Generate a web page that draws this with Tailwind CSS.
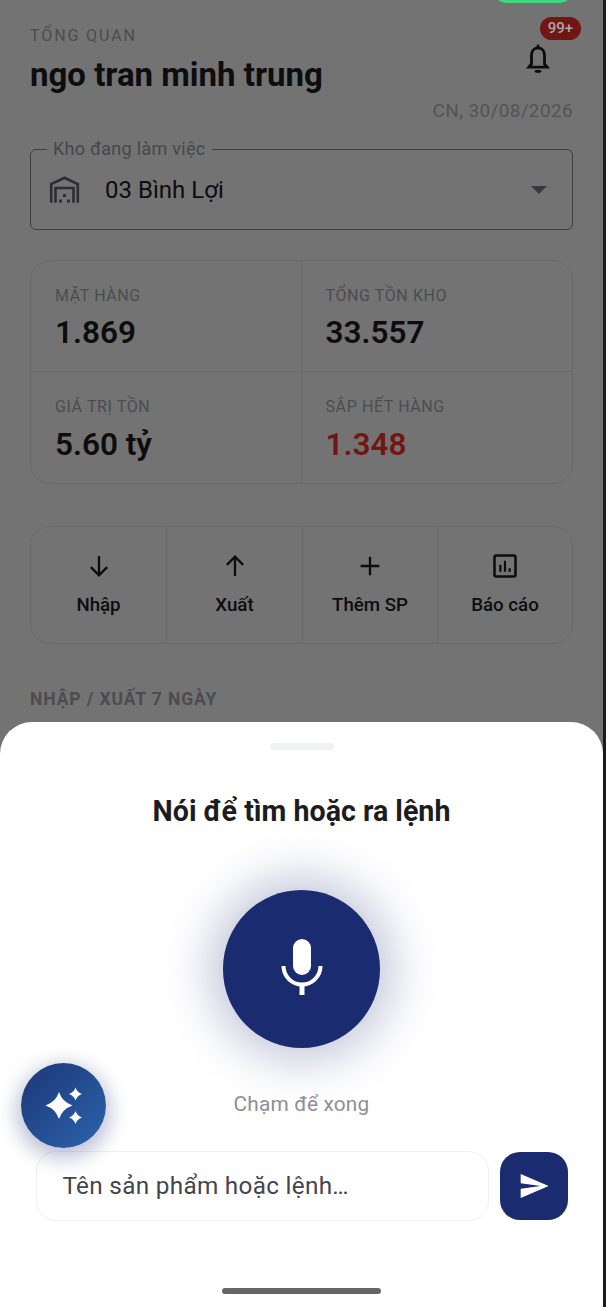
<!DOCTYPE html>
<html lang="vi">
<head>
<meta charset="utf-8">
<script src="https://cdn.jsdelivr.net/npm/@tailwindcss/browser@4"></script>
</head>
<body class="bg-[#737373] font-['Roboto',sans-serif]">
<div class="relative w-[606px] h-[1307px] overflow-hidden flex bg-[#1c1c1c]">
    <!-- dimmed dashboard -->
    <main class="relative w-[603px] h-full shrink-0 bg-[#737373] pt-[26px] px-[30px]">
        <div class="absolute left-[496px] top-[-16px] w-[74px] h-[19px] rounded-full bg-[#3fd67f]"></div>

        <header class="relative h-[97px]">
            <p class="pt-[1px] text-[16px] leading-[18px] tracking-[1.9px] text-[#4c4c50]">TỔNG QUAN</p>
            <h1 class="mt-[11px] text-[33px] leading-[38px] font-bold text-[#0d0d0f]">ngo tran minh trung</h1>
            <p class="absolute right-0 top-[73px] text-[19px] leading-[24px] tracking-[0.35px] text-[#535357]">CN, 30/08/2026</p>
            <svg class="absolute left-[491px] top-[17px]" width="34" height="34" viewBox="0 0 24 24" fill="none" stroke="#0c0c0e" stroke-width="2"><path d="M12 3.400c-3 0-4.600 2.500-4.600 5.300v6.100L5.600 17h12.800l-1.800-2.200V8.700c0-2.800-1.600-5.300-4.600-5.300z"/><path d="M10.700 20h2.600" stroke-linecap="round"/><path d="M12 2v1.400" stroke-linecap="round"/></svg>
            <span class="absolute left-[510px] top-[-9px] w-[41px] h-[23px] rounded-full bg-[#711515] text-[15px] leading-[23px] font-medium text-center text-[#a9a9a9]">99+</span>
        </header>

        <!-- warehouse select -->
        <div class="relative mt-[26px] h-[81px] border border-[#3d3d42] rounded-[6px] flex items-center pl-[17px] pr-[25px]">
            <span class="absolute left-[16px] top-[-12px] px-[6px] bg-[#737373] text-[18px] leading-[22px] tracking-[0.3px] text-[#47474b]">Kho đang làm việc</span>
            <svg width="32" height="32" viewBox="0 0 32 32" fill="none" stroke="#2e2e32" stroke-width="2.600"><path d="M3.200 28.700V10L16.500 3.800 29.800 10V28.700"/><path d="M7.500 28.700V14H25.500V28.700"/><rect x="15" y="20" width="3" height="3" fill="#2e2e32" stroke="none"/><rect x="11" y="25.500" width="3" height="3" fill="#2e2e32" stroke="none"/><rect x="19" y="25.500" width="3" height="3" fill="#2e2e32" stroke="none"/></svg>
            <span class="ml-[25px] text-[24px] leading-[32px] text-[#0d0d0f]">03 Bình Lợi</span>
            <span class="ml-auto w-0 h-0 border-x-[8px] border-x-transparent border-t-[8px] border-t-[#39393d]"></span>
        </div>

        <!-- stats -->
        <section class="mt-[30px] h-[224px] border border-[#6a6a6c] rounded-[20px] grid grid-cols-2 grid-rows-2 overflow-hidden">
            <div class="pl-[24px] pt-[25px] border-r border-b border-[#6a6a6c]">
                <p class="text-[16px] leading-[20px] tracking-[0.6px] text-[#4c4c50]">MẶT HÀNG</p>
                <p class="mt-[8px] text-[31.500px] leading-[38px] font-semibold text-[#0d0d0f]">1.869</p>
            </div>
            <div class="pl-[24px] pt-[25px] border-b border-[#6a6a6c]">
                <p class="text-[16px] leading-[20px] tracking-[0.6px] text-[#4c4c50]">TỔNG TỒN KHO</p>
                <p class="mt-[8px] text-[31.500px] leading-[38px] font-semibold text-[#0d0d0f]">33.557</p>
            </div>
            <div class="pl-[24px] pt-[25px] border-r border-[#6a6a6c]">
                <p class="text-[16px] leading-[20px] tracking-[0.6px] text-[#4c4c50]">GIÁ TRỊ TỒN</p>
                <p class="mt-[9px] text-[31.500px] leading-[38px] font-semibold text-[#0d0d0f]">5.60 tỷ</p>
            </div>
            <div class="pl-[24px] pt-[25px]">
                <p class="text-[16px] leading-[20px] tracking-[0.6px] text-[#4c4c50]">SẮP HẾT HÀNG</p>
                <p class="mt-[9px] text-[31.500px] leading-[38px] font-semibold text-[#711515]">1.348</p>
            </div>
        </section>

        <!-- quick actions -->
        <section class="mt-[42px] h-[118px] border border-[#6a6a6c] rounded-[20px] grid grid-cols-[136px_136px_135px_1fr] overflow-hidden">
            <div class="flex flex-col items-center pt-[25px] border-r border-[#6a6a6c]">
                <svg width="28" height="28" viewBox="0 0 24 24" fill="none" stroke="#0d0d0f" stroke-width="2"><path d="M12 3.500v16M5 13l7 7 7-7"/></svg>
                <span class="mt-[13px] text-[18.700px] leading-[24px] font-medium text-[#0d0d0f]">Nhập</span>
            </div>
            <div class="flex flex-col items-center pt-[25px] border-r border-[#6a6a6c]">
                <svg width="28" height="28" viewBox="0 0 24 24" fill="none" stroke="#0d0d0f" stroke-width="2"><path d="M12 20.500v-16M5 11l7-7 7 7"/></svg>
                <span class="mt-[13px] text-[18.700px] leading-[24px] font-medium text-[#0d0d0f]">Xuất</span>
            </div>
            <div class="flex flex-col items-center pt-[25px] border-r border-[#6a6a6c]">
                <svg width="28" height="28" viewBox="0 0 24 24" fill="none" stroke="#0d0d0f" stroke-width="2"><path d="M12 4v16M4 12h16"/></svg>
                <span class="mt-[13px] text-[18.700px] leading-[24px] font-medium text-[#0d0d0f]">Thêm SP</span>
            </div>
            <div class="flex flex-col items-center pt-[25px]">
                <svg width="28" height="28" viewBox="0 0 24 24" fill="none" stroke="#0d0d0f"><rect x="3" y="3" width="18" height="18" rx="1.500" stroke-width="2.200"/><path d="M8 11v6M12 7.500V17M16 14v3" stroke-width="1.900"/></svg>
                <span class="mt-[13px] text-[18.700px] leading-[24px] font-medium text-[#0d0d0f]">Báo cáo</span>
            </div>
        </section>

        <h2 class="mt-[44px] text-[17.500px] leading-[22px] font-bold tracking-[0.9px] text-[#4c4c50]">NHẬP / XUẤT 7 NGÀY</h2>

        <!-- voice bottom sheet -->
        <div class="absolute left-0 top-[722px] w-[603px] h-[585px] bg-white rounded-t-[32px] flex flex-col items-center">
            <div class="mt-[21px] w-[64px] h-[7px] rounded-full bg-[#f1f2f4]"></div>
            <h3 class="mt-[43px] text-[28.600px] leading-[36px] font-bold text-[#1c1c1f]">Nói để tìm hoặc ra lệnh</h3>
            <button class="mt-[61px] w-[157px] h-[158px] rounded-full bg-[#1b2b6f] flex items-center justify-center shadow-[0_0_48px_12px_rgba(27,43,111,0.28)]">
                <svg width="64" height="64" viewBox="0 0 64 64" fill="#fff"><rect x="23" y="2" width="18" height="36" rx="9"/><path d="M13.500 29a18.500 18.500 0 0 0 37 0" fill="none" stroke="#fff" stroke-width="4"/><rect x="29.500" y="47" width="5" height="11"/></svg>
            </button>
            <p class="mt-[43px] text-[20.800px] leading-[26px] tracking-[0.2px] text-[#8e8e96]">Chạm để xong</p>
            <div class="mt-[34px] w-[532px] flex items-center gap-[11px]">
                <div class="w-[453px] h-[70px] border border-[#f0f0f2] rounded-[20px] flex items-center pl-[26px] text-[24.300px] tracking-[0.3px] text-[#45454d]">Tên sản phẩm hoặc lệnh…</div>
                <button class="w-[68px] h-[68px] rounded-[20px] bg-[#1b2b6f] flex items-center justify-center">
                    <svg width="32" height="32" viewBox="0 0 24 24" fill="#fff"><path d="M2.010 21 23 12 2.010 3 2 10l15 2-15 2z"/></svg>
                </button>
            </div>
            <div class="absolute left-[222px] top-[566px] w-[159px] h-[6px] rounded-full bg-[#666666]"></div>
        </div>

        <!-- floating assistant button -->
        <button class="absolute left-[21px] top-[1063px] w-[85px] h-[85px] rounded-full bg-gradient-to-br from-[#1e3678] to-[#2b64ac] flex items-center justify-center shadow-[0_6px_20px_4px_rgba(27,43,111,0.3)]">
            <svg width="44" height="44" viewBox="0 0 44 44" fill="#fff"><path d="M17 8Q20.400 18.100 30.500 21.500 20.400 24.900 17 35 13.600 24.900 3.500 21.500 13.600 18.100 17 8z"/><path d="M33.500 3.500Q35.100 8.400 40 10 35.100 11.600 33.500 16.500 31.900 11.600 27 10 31.900 8.400 33.500 3.500z"/><path d="M33.500 27Q35.100 31.900 40 33.500 35.100 35.100 33.500 40 31.900 35.100 27 33.500 31.900 31.900 33.500 27z"/></svg>
        </button>
    </main>
    <div class="w-[3px] h-full bg-[#1c1c1c]"></div>
</div>
</body>
</html>
